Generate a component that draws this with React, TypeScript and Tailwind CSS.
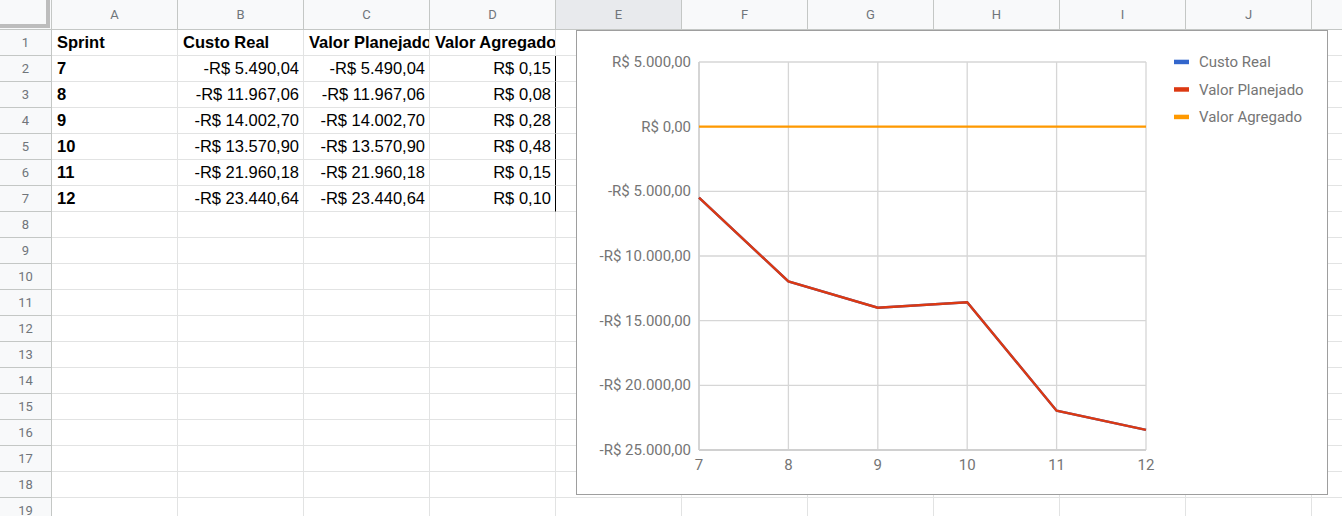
import React from "react";

const cols = ["A", "B", "C", "D", "E", "F", "G", "H", "I", "J", "K"];

const rows = [
  { sprint: "7", custo: "-R$ 5.490,04", plan: "-R$ 5.490,04", agreg: "R$ 0,15" },
  { sprint: "8", custo: "-R$ 11.967,06", plan: "-R$ 11.967,06", agreg: "R$ 0,08" },
  { sprint: "9", custo: "-R$ 14.002,70", plan: "-R$ 14.002,70", agreg: "R$ 0,28" },
  { sprint: "10", custo: "-R$ 13.570,90", plan: "-R$ 13.570,90", agreg: "R$ 0,48" },
  { sprint: "11", custo: "-R$ 21.960,18", plan: "-R$ 21.960,18", agreg: "R$ 0,15" },
  { sprint: "12", custo: "-R$ 23.440,64", plan: "-R$ 23.440,64", agreg: "R$ 0,10" },
];

const sprints = [7, 8, 9, 10, 11, 12];
const custo = [-5490.04, -11967.06, -14002.7, -13570.9, -21960.18, -23440.64];
const agregado = [0.15, 0.08, 0.28, 0.48, 0.15, 0.1];

const yTicks = [
  { v: 5000, label: "R$ 5.000,00" },
  { v: 0, label: "R$ 0,00" },
  { v: -5000, label: "-R$ 5.000,00" },
  { v: -10000, label: "-R$ 10.000,00" },
  { v: -15000, label: "-R$ 15.000,00" },
  { v: -20000, label: "-R$ 20.000,00" },
  { v: -25000, label: "-R$ 25.000,00" },
];

// plot box inside the chart (chart-local px)
const L = 122;
const R = 569;
const T = 31;
const B = 419;
const xOf = (s: number) => L + ((s - 7) * (R - L)) / 5;
const yOf = (v: number) => T + ((5000 - v) * (B - T)) / 30000;
const pts = (vals: number[]) => vals.map((v, i) => `${xOf(sprints[i])},${yOf(v)}`).join(" ");

const cellFont = "font-['Liberation_Sans',Arial,sans-serif] text-[16.5px] text-black";

function Cell({
  children,
  right,
  bold,
  edge,
}: {
  children?: React.ReactNode;
  right?: boolean;
  bold?: boolean;
  edge?: boolean;
}) {
  return (
    <div
      className={`flex items-center overflow-hidden whitespace-nowrap border-b border-r border-b-[#e2e3e3] ${
        edge ? "border-r-black" : "border-r-[#e2e3e3]"
      } ${right ? "justify-end pr-[4px]" : "pl-[5px]"} ${bold ? "font-bold" : ""} ${cellFont}`}
    >
      {children}
    </div>
  );
}

function Chart() {
  return (
    <div className="absolute left-[576px] top-[30px] h-[465px] w-[752px] border border-[#9e9e9e] bg-white">
      <svg width="750" height="463" className="block" fontFamily="Roboto, sans-serif">
        {yTicks.map((t) => (
          <g key={t.v}>
            <line x1={L} x2={R} y1={yOf(t.v)} y2={yOf(t.v)} stroke="#d6d6d6" strokeWidth="1.3" />
            <text x={114} y={yOf(t.v) + 5} textAnchor="end" fontSize="15" fill="#757575">
              {t.label}
            </text>
          </g>
        ))}
        {sprints.map((s) => (
          <g key={s}>
            <line x1={xOf(s)} x2={xOf(s)} y1={T} y2={B} stroke="#d6d6d6" strokeWidth="1.3" />
            <text x={xOf(s)} y={439} textAnchor="middle" fontSize="15" fill="#757575">
              {s}
            </text>
          </g>
        ))}
        <line x1={L} x2={R} y1={B} y2={B} stroke="#d0d0d0" strokeWidth="2" />
        <line x1={L} x2={L} y1={T} y2={B} stroke="#d0d0d0" strokeWidth="1.5" />

        <polyline points={pts(custo)} fill="none" stroke="#3366cc" strokeWidth="2.4" />
        <polyline points={pts(custo)} fill="none" stroke="#dc3912" strokeWidth="2.4" />
        <polyline points={pts(agregado)} fill="none" stroke="#ff9900" strokeWidth="2.4" />

        {[
          { c: "#3366cc", t: "Custo Real" },
          { c: "#dc3912", t: "Valor Planejado" },
          { c: "#ff9900", t: "Valor Agregado" },
        ].map((l, i) => {
          const cy = 30.7 + i * 27.5;
          return (
            <g key={l.t}>
              <rect x={597} y={cy - 2} width="15" height="4.5" fill={l.c} />
              <text x={622} y={cy + 5.5} fontSize="15" fill="#757575">
                {l.t}
              </text>
            </g>
          );
        })}
      </svg>
    </div>
  );
}

export default function App() {
  const body: React.ReactNode[] = [];
  for (let r = 1; r <= 19; r++) {
    body.push(
      <div
        key={`h${r}`}
        className="flex items-center justify-center border-b border-r border-[#c4c7c5] bg-[#f8f9fa] font-['Roboto',sans-serif] text-[13px] text-[#70757a]"
      >
        {r}
      </div>
    );
    const d = r >= 2 && r <= 7 ? rows[r - 2] : null;
    cols.forEach((c) => {
      const key = `${c}${r}`;
      if (r === 1 && c === "A") body.push(<Cell key={key} bold>Sprint</Cell>);
      else if (r === 1 && c === "B") body.push(<Cell key={key} bold>Custo Real</Cell>);
      else if (r === 1 && c === "C") body.push(<Cell key={key} bold>Valor Planejado</Cell>);
      else if (r === 1 && c === "D") body.push(<Cell key={key} bold>Valor Agregado</Cell>);
      else if (d && c === "A") body.push(<Cell key={key} bold>{d.sprint}</Cell>);
      else if (d && c === "B") body.push(<Cell key={key} right>{d.custo}</Cell>);
      else if (d && c === "C") body.push(<Cell key={key} right>{d.plan}</Cell>);
      else if (d && c === "D") body.push(<Cell key={key} right edge>{d.agreg}</Cell>);
      else body.push(<Cell key={key} />);
    });
  }

  return (
    <div className="relative h-[516px] w-[1342px] overflow-hidden bg-white">
      <div className="grid grid-cols-[52px_repeat(11,126px)] grid-rows-[30px_repeat(19,26px)]">
        <div className="border-b border-r border-[#c4c7c5] bg-[#f8f9fa]">
          <div className="h-[28px] w-[50px] border-b-4 border-r-4 border-[#bdbdbd]" />
        </div>
        {cols.map((c) => (
          <div
            key={c}
            className={`flex items-center justify-center border-b border-r border-[#c4c7c5] font-['Roboto',sans-serif] text-[13px] text-[#70757a] ${
              c === "E" ? "bg-[#e8eaed]" : "bg-[#f8f9fa]"
            }`}
          >
            {c}
          </div>
        ))}
        {body}
      </div>
      <Chart />
    </div>
  );
}
